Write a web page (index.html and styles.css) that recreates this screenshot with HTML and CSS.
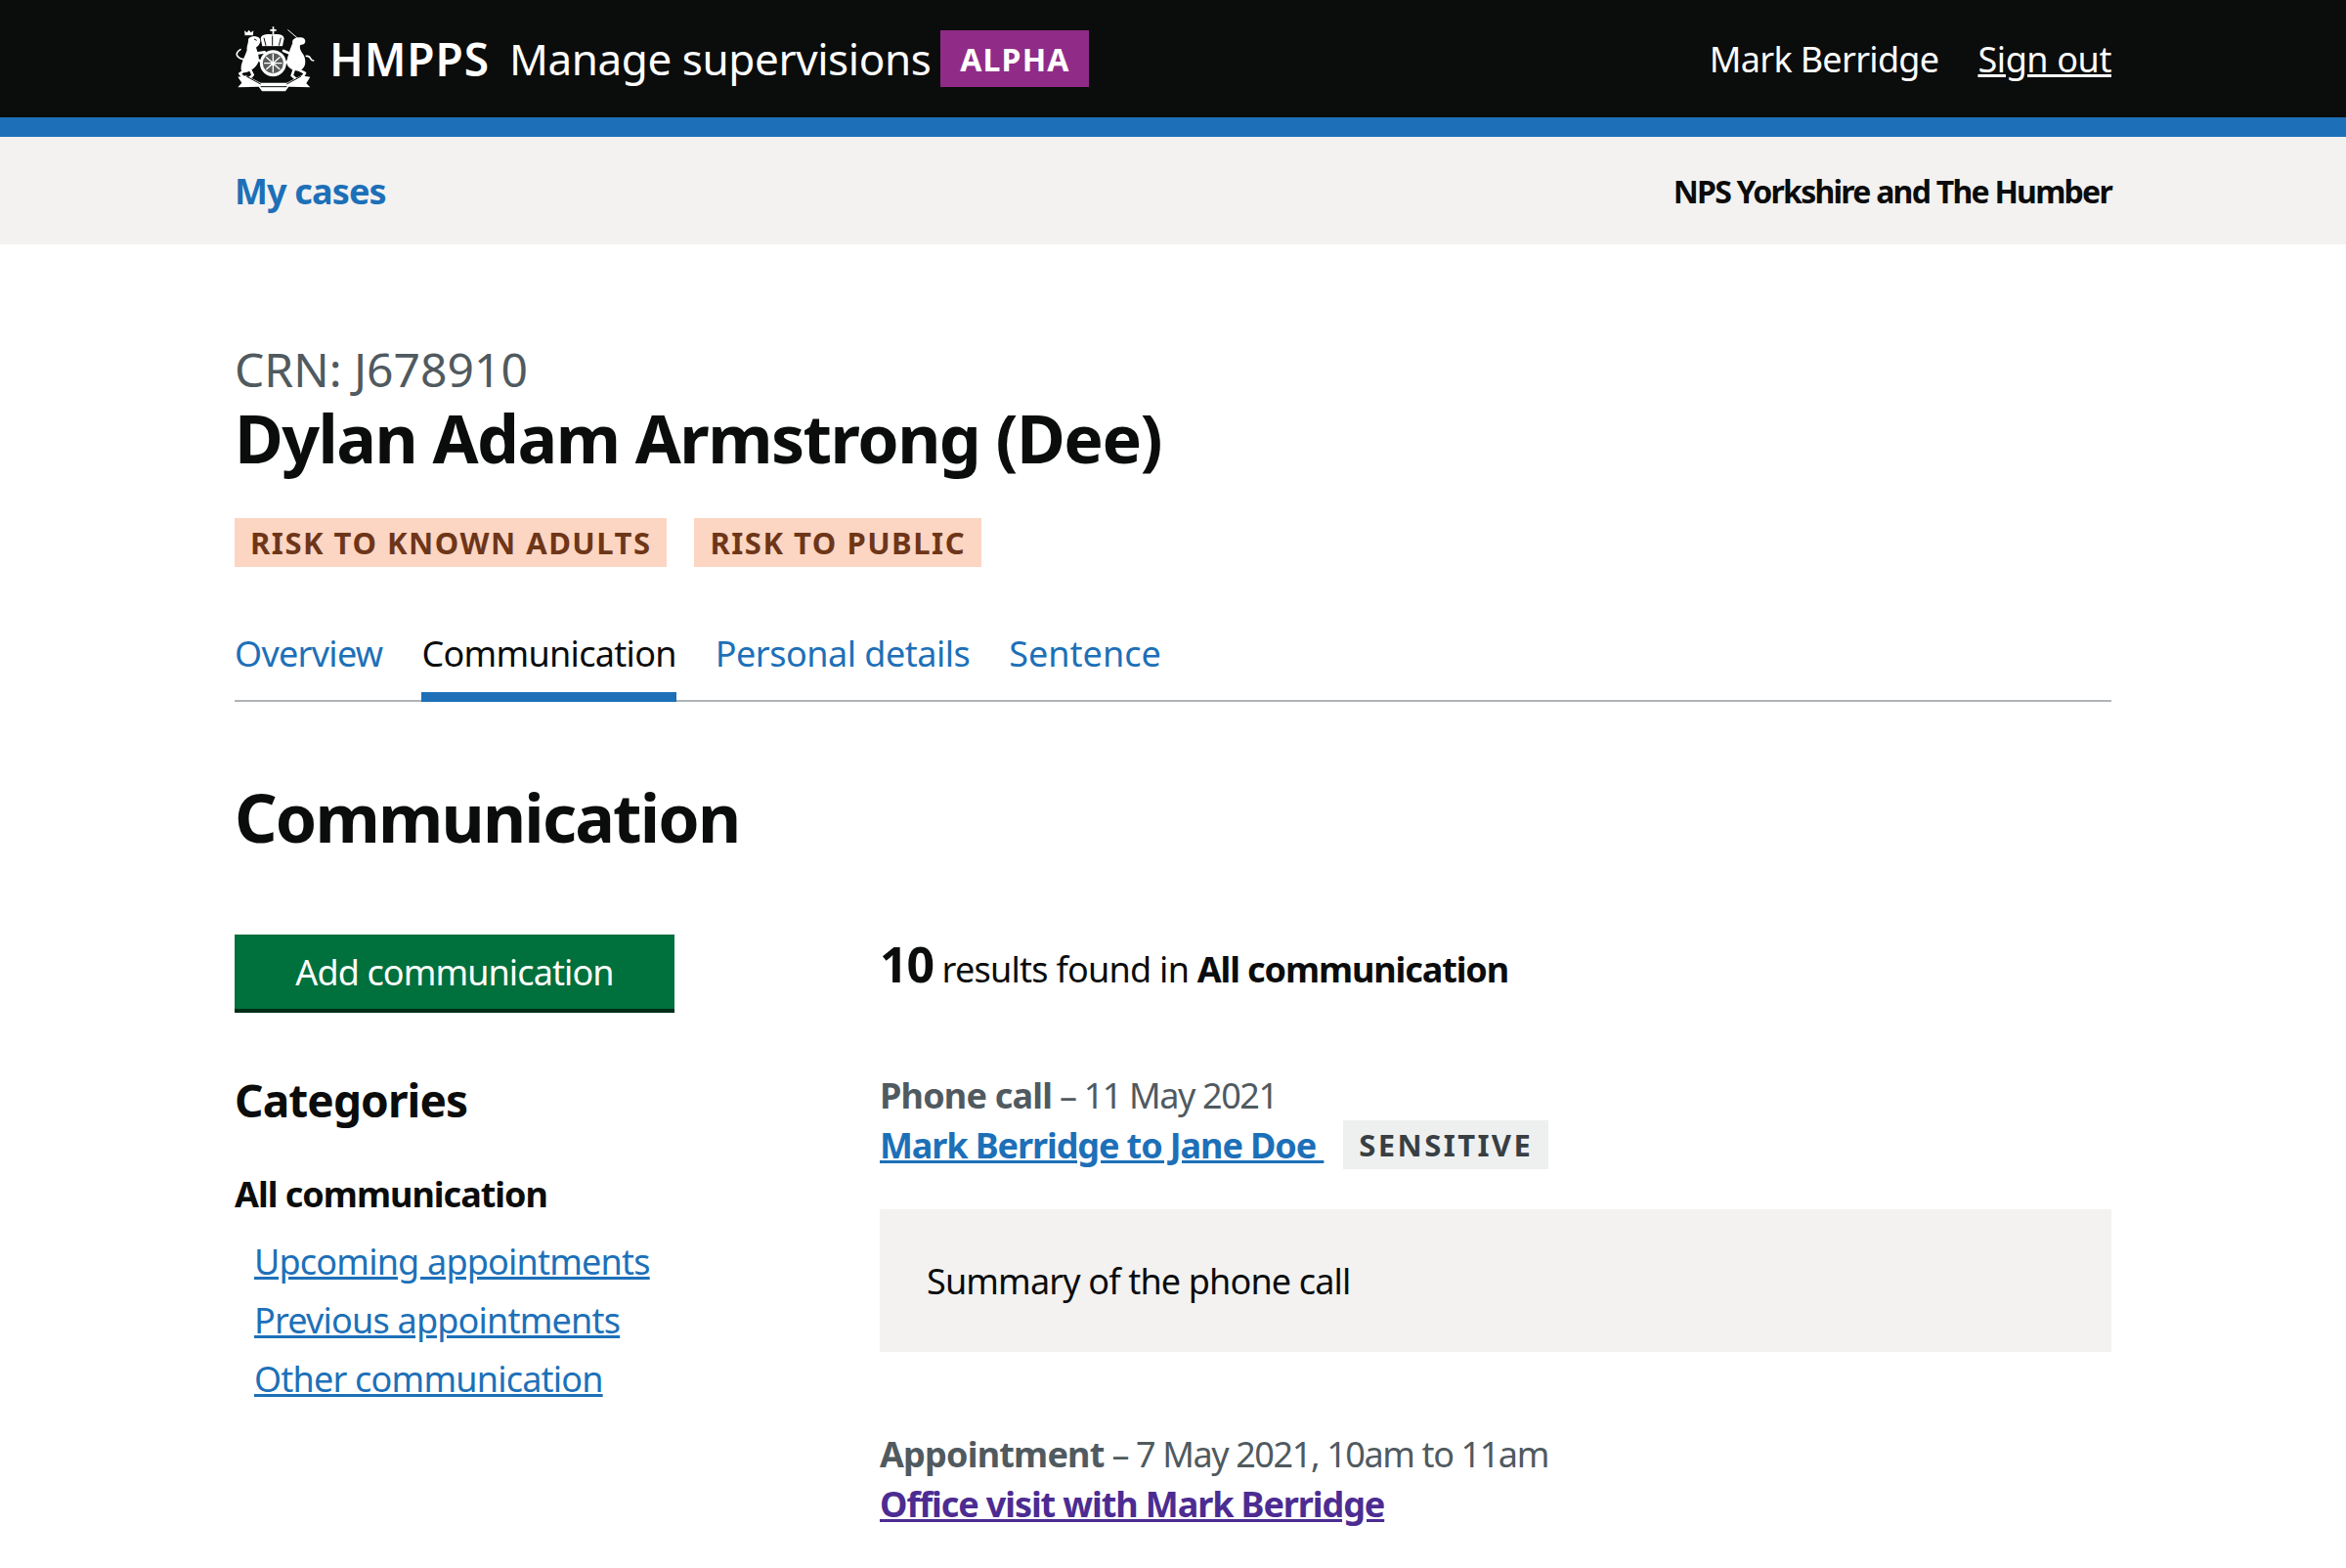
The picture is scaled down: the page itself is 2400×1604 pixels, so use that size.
FILE: index.html
```html
<!DOCTYPE html>
<html lang="en">
<head>
<meta charset="utf-8">
<title>Communication</title>
<link rel="stylesheet" href="styles.css">
</head>
<body>
<header class="site-header">
  <div class="container header-row">
    <div class="brand">
      <svg class="crest" viewBox="0 0 300 255" aria-hidden="true">
        <g class="crest-fill">
          <path d="M146 28h5v8h7v5h-7v10h-5V41h-7v-5h7z"/>
          <path d="M115 88L110 64C112 52 128 50 146 52C166 50 180 52 182 64L177 88Z"/>
          <path d="M72 70C70 56 100 52 108 66C112 78 102 88 96 92C100 104 106 118 104 132C100 150 84 160 72 166C60 172 52 168 50 160C48 140 62 120 68 100C66 90 72 80 72 70Z"/>
          <path d="M62 56L60 40L68 46L74 38L80 46L88 40L86 56Z"/>
          <path d="M208 78C204 64 224 58 240 62C248 66 250 76 242 82L232 84C228 92 232 100 240 112C250 128 250 150 236 160C222 168 200 160 192 146C186 130 198 110 200 98Z"/>
          <path d="M40 182L66 178L110 200L190 200L234 178L262 182L250 202L262 214L196 212L186 226L114 226L104 212L40 214L52 200Z"/>
        </g>
        <g class="crest-line">
          <path d="M194 38L222 62" stroke-width="3"/>
          <path d="M56 128C40 124 26 112 48 98" stroke-width="5"/>
          <path d="M98 110L122 106M96 128L116 136" stroke-width="8"/>
          <path d="M64 160L46 172L60 186M78 160L86 176L72 190" stroke-width="8"/>
          <path d="M250 118C268 116 258 132 272 132" stroke-width="5"/>
          <path d="M204 112L180 102M200 130L182 142" stroke-width="8"/>
          <path d="M226 160L246 170L232 192M212 160L206 178L220 190" stroke-width="8"/>
        </g>
        <circle class="crest-ring" cx="148" cy="140" r="36"/>
        <g class="crest-line">
          <path d="M148 112V168M122 140H174M128 122L168 158M168 122L128 158" stroke-width="4"/>
        </g>
        <g class="crest-gap">
          <path d="M120 62L126 86M146 56V86M172 62L166 86M118 90H176"/>
          <path d="M62 56H86M90 66L98 70"/>
          <path d="M66 180L110 204M234 180L190 204M110 212H190"/>
        </g>
      </svg>
      <span class="org">HMPPS</span>
      <span class="service">Manage supervisions</span>
      <span class="phase">ALPHA</span>
    </div>
    <nav class="user-nav">
      <span class="user-name">Mark Berridge</span>
      <a class="sign-out" href="#">Sign out</a>
    </nav>
  </div>
</header>

<div class="sub-nav">
  <div class="container sub-row">
    <a class="my-cases" href="#">My cases</a>
    <span class="team">NPS Yorkshire and The Humber</span>
  </div>
</div>

<main class="container main">
  <p class="caption">CRN: J678910</p>
  <h1 class="name">Dylan Adam Armstrong (Dee)</h1>
  <div class="tags">
    <span class="tag tag-risk">RISK TO KNOWN ADULTS</span>
    <span class="tag tag-risk">RISK TO PUBLIC</span>
  </div>
  <nav class="tabs">
    <a class="tab" href="#">Overview</a>
    <a class="tab tab-active" href="#">Communication</a>
    <a class="tab tab-personal" href="#">Personal details</a>
    <a class="tab tab-sentence" href="#">Sentence</a>
  </nav>
  <h2 class="page-title">Communication</h2>
  <div class="columns">
    <aside class="sidebar">
      <a class="button" href="#">Add communication</a>
      <h3 class="side-title">Categories</h3>
      <p class="side-current">All communication</p>
      <ul class="side-list">
        <li><a href="#">Upcoming appointments</a></li>
        <li><a href="#">Previous appointments</a></li>
        <li><a href="#">Other communication</a></li>
      </ul>
    </aside>
    <section class="results">
      <p class="count"><b class="count-num">10</b> results found in <b>All communication</b></p>
      <article class="entry">
        <p class="meta"><b>Phone call</b> – 11 May 2021</p>
        <div class="entry-title">
          <a class="entry-link" href="#">Mark Berridge to Jane Doe </a>
          <span class="tag tag-grey">SENSITIVE</span>
        </div>
        <div class="summary">Summary of the phone call</div>
      </article>
      <article class="entry entry-next">
        <p class="meta"><b>Appointment</b> – 7 May 2021, 10am to 11am</p>
        <div class="entry-title">
          <a class="entry-link visited" href="#">Office visit with Mark Berridge</a>
        </div>
      </article>
    </section>
  </div>
</main>
</body>
</html>
```
FILE: styles.css
```css
* { box-sizing: border-box; }
html, body { margin: 0; padding: 0; }
body {
  height: 1604px;
  overflow: hidden;
  background: #fff;
  color: #0b0c0c;
  font-family: "Noto Sans", "Liberation Sans", sans-serif;
  font-size: 36px;
}
p, h1, h2, h3, ul { margin: 0; padding: 0; }
b { font-weight: 700; }
a { color: #1d70b8; }
.container { width: 1920px; margin: 0 auto; }

.site-header { height: 140px; background: #0b0c0c; border-bottom: 20px solid #1d70b8; color: #fff; }
.header-row { height: 120px; display: flex; align-items: center; justify-content: space-between; }
.brand { display: flex; align-items: center; }
.crest { width: 100px; height: 85px; margin: 0 0 0 -10px; }
.crest-fill { fill: #fff; }
.crest-line { fill: none; stroke: #fff; stroke-linecap: round; stroke-linejoin: round; }
.crest-ring { fill: #5a5c5c; stroke: #fff; stroke-width: 9; }
.crest-gap { fill: none; stroke: #0b0c0c; stroke-width: 3; }
.org { margin-left: 7px; font-size: 46px; font-weight: 600; letter-spacing: 0.9px; }
.service { margin-left: 20px; font-size: 44px; letter-spacing: -0.4px; }
.phase { margin-left: 10px; height: 58px; width: 152px; background: #912b88; font-size: 32px; font-weight: 700; letter-spacing: 1.2px; display: flex; align-items: center; justify-content: center; }
.user-nav { display: flex; gap: 40px; font-size: 36px; }
.user-name { letter-spacing: -0.7px; }
.sign-out { color: #fff; letter-spacing: -0.4px; }

.sub-nav { height: 110px; background: #f3f2f1; }
.sub-row { height: 110px; display: flex; align-items: center; justify-content: space-between; }
.my-cases { font-size: 36px; font-weight: 700; text-decoration: none; letter-spacing: -0.85px; }
.team { font-size: 32px; font-weight: 700; letter-spacing: -1.75px; }

.main { padding-top: 98px; }
.caption { font-size: 48px; line-height: 60px; color: #505a5f; }
.name { font-size: 68px; line-height: 80px; font-weight: 700; letter-spacing: -1.5px; }
.tags { display: flex; gap: 28px; margin-top: 42px; }
.tag { display: inline-flex; align-items: center; height: 50px; padding: 0 16px; font-size: 31px; font-weight: 700; letter-spacing: 1.5px; }
.tag-risk { background: #fcd6c3; color: #6e3619; }
.tag-grey { background: #eef0f0; color: #383f43; letter-spacing: 2.4px; }

.tabs { display: flex; gap: 40px; margin-top: 50px; height: 88px; border-bottom: 2px solid #b1b4b6; letter-spacing: -0.7px; }
.tab { height: 88px; padding-top: 14px; text-decoration: none; font-size: 36px; line-height: 50px; }
.tab-active { color: #0b0c0c; border-bottom: 10px solid #1d70b8; }
.tab-personal { letter-spacing: -0.5px; }
.tab-sentence { letter-spacing: 0; }

.page-title { margin-top: 78px; font-size: 68px; line-height: 80px; font-weight: 700; letter-spacing: -1.8px; }
.columns { display: grid; grid-template-columns: 660px 1260px; margin-top: 80px; }

.button { display: flex; align-items: center; justify-content: center; width: 450px; height: 80px; background: #00703c; border-bottom: 4px solid #002d18; color: #fff; text-decoration: none; font-size: 36px; letter-spacing: -0.9px; }
.side-title { margin-top: 59px; font-size: 46px; line-height: 60px; font-weight: 700; letter-spacing: -0.9px; }
.side-current { margin-top: 42px; font-size: 36px; line-height: 50px; font-weight: 700; letter-spacing: -1px; }
.side-list { margin-top: 14px; padding-left: 20px; list-style: none; font-size: 36px; line-height: 60px; letter-spacing: -0.8px; }

.count { font-size: 36px; line-height: 60px; letter-spacing: -0.75px; }
.count b { letter-spacing: -1.1px; }
.count-num { font-size: 50px; }
.entry { margin-top: 74px; }
.entry-next { margin-top: 80px; }
.meta { font-size: 36px; line-height: 50px; color: #505a5f; letter-spacing: -1.4px; }
.meta b { letter-spacing: -0.8px; }
.entry-title { display: flex; align-items: center; gap: 20px; height: 50px; }
.entry-link { font-size: 36px; font-weight: 700; white-space: pre; letter-spacing: -1.1px; }
.visited { color: #4c2c92; }
.summary { margin-top: 41px; height: 146px; background: #f3f2f1; padding: 0 48px; display: flex; align-items: center; font-size: 36px; letter-spacing: -0.85px; }
```
